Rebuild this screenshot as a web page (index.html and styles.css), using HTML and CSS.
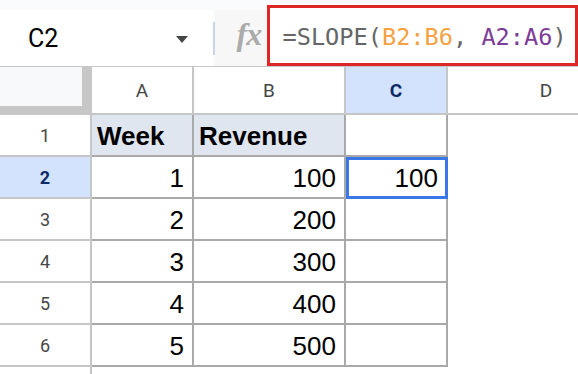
FILE: index.html
```html
<!DOCTYPE html>
<html lang="en">
<head>
    <meta charset="UTF-8">
    <title>SLOPE</title>
    <link rel="stylesheet" href="styles.css">
</head>
<body>
    <div class="toolbar">
        <div class="namebox">
            <span class="ref">C2</span>
            <span class="caret"></span>
        </div>
        <div class="sep"></div>
        <div class="fx">fx</div>
        <div class="formula">=SLOPE(<span class="r1">B2:B6</span>, <span class="r2">A2:A6</span>)</div>
    </div>

    <div class="sheet">
        <div class="corner"></div>
        <div class="colhead">A</div>
        <div class="colhead">B</div>
        <div class="colhead active">C</div>
        <div class="colhead last">D</div>

        <div class="rowhead">1</div>
        <div class="cell title">Week</div>
        <div class="cell title">Revenue</div>
        <div class="cell"></div>
        <div class="blank"></div>

        <div class="rowhead active">2</div>
        <div class="cell num">1</div>
        <div class="cell num">100</div>
        <div class="cell num selected">100</div>
        <div class="blank"></div>

        <div class="rowhead">3</div>
        <div class="cell num">2</div>
        <div class="cell num">200</div>
        <div class="cell"></div>
        <div class="blank"></div>

        <div class="rowhead">4</div>
        <div class="cell num">3</div>
        <div class="cell num">300</div>
        <div class="cell"></div>
        <div class="blank"></div>

        <div class="rowhead">5</div>
        <div class="cell num">4</div>
        <div class="cell num">400</div>
        <div class="cell"></div>
        <div class="blank"></div>

        <div class="rowhead">6</div>
        <div class="cell num">5</div>
        <div class="cell num">500</div>
        <div class="cell"></div>
        <div class="blank"></div>

        <div class="rowhead filler"></div>
    </div>
</body>
</html>
```

FILE: styles.css
```css
body {
    margin: 0;
    height: 100vh;
    display: flex;
    flex-direction: column;
    background: #ffffff;
    font-family: "Liberation Sans", Arial, sans-serif;
    overflow: hidden;
}

.toolbar {
    height: 66px;
    display: flex;
    align-items: flex-end;
    background: #f9fbfd;
    flex-shrink: 0;
}

.namebox {
    width: 213px;
    height: 56px;
    background: #ffffff;
    display: flex;
    align-items: center;
    justify-content: space-between;
    padding: 0 25px 0 28px;
    box-sizing: border-box;
    font-family: Roboto, sans-serif;
    font-size: 25px;
    color: #000000;
}

.caret {
    width: 0;
    height: 0;
    border-left: 6.5px solid transparent;
    border-right: 6.5px solid transparent;
    border-top: 7px solid #444746;
    margin-top: 2px;
}

.sep {
    width: 1.5px;
    height: 33px;
    background: #c9d6e8;
    align-self: center;
    margin-top: 10px;
}

.fx {
    width: 52px;
    height: 56px;
    background: #f7f7f7;
    box-sizing: border-box;
    padding: 6px 0 0 22px;
    font-family: "Liberation Serif", serif;
    font-style: italic;
    font-weight: bold;
    font-size: 32px;
    color: #ababab;
    letter-spacing: -1px;
}

.formula {
    flex: 1;
    height: 61px;
    box-sizing: border-box;
    border: 3px solid #df2626;
    background: #ffffff;
    display: flex;
    align-items: center;
    padding: 2px 0 0 13px;
    font-family: "DejaVu Sans Mono", monospace;
    font-size: 23.6px;
    color: #666666;
    white-space: pre;
}

.r1 {
    color: #f5a142;
}

.r2 {
    color: #7d3c98;
}

.sheet {
    flex: 1;
    display: grid;
    grid-template-columns: 92px 102px 152px 102px 1fr;
    grid-template-rows: 48px repeat(6, 42px) 1fr;
    border-top: 1px solid #c4c7c5;
}

.corner {
    background: #f8f9fa;
    border-right: 10px solid #c7c7c7;
    border-bottom: 9px solid #c7c7c7;
}

.colhead {
    display: flex;
    align-items: center;
    justify-content: center;
    border-right: 2px solid #c4c7c5;
    border-bottom: 2px solid #c4c7c5;
    font-family: Roboto, sans-serif;
    font-size: 19px;
    color: #444746;
    padding-top: 1px;
}

/* column D runs past the window, so its label sits right of centre */
.colhead.last {
    border-right: none;
    padding-left: 66px;
}

.colhead.active {
    background: #d3e3fd;
    color: #0b2a66;
    font-weight: bold;
}

.rowhead {
    display: flex;
    align-items: center;
    justify-content: center;
    border-right: 2px solid #c4c7c5;
    border-bottom: 2px solid #c4c7c5;
    font-family: Roboto, sans-serif;
    font-size: 18px;
    color: #444746;
}

.rowhead.active {
    background: #d3e3fd;
    color: #0b2a66;
    font-weight: bold;
}

.rowhead.filler {
    border-bottom: none;
}

.cell {
    display: flex;
    align-items: flex-end;
    border-right: 2px solid #a9a9a9;
    border-bottom: 2px solid #a9a9a9;
    padding: 0 8px 3px 5px;
    font-size: 26px;
    color: #000000;
}

.cell.title {
    background: #dfe6ef;
    font-weight: bold;
}

.cell.num {
    justify-content: flex-end;
}

.cell.selected {
    outline: 3px solid #3b78e7;
    outline-offset: -3px;
}

.blank {
    background: #ffffff;
}
```
